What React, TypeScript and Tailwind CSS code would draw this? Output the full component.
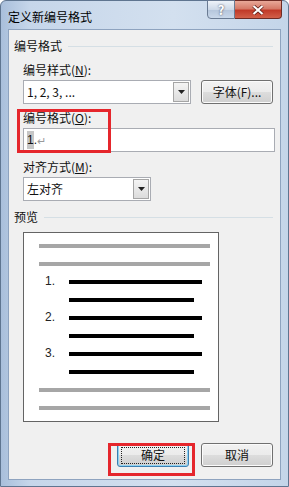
import React from "react";

const cjk = { fontFamily: '"Microsoft YaHei", "Noto Sans CJK SC", sans-serif' };

function Arrow() {
  return (
    <svg width="7" height="4" viewBox="0 0 7 4">
      <path d="M0 0h7L3.5 4z" fill="#222" />
    </svg>
  );
}

function Combo({ text, width }: { text: string; width: string }) {
  return (
    <div className={`${width} h-[24px] flex bg-white border border-[#a9acb3]`}>
      <div className="flex-1 flex items-center pl-[3px] text-[12px] text-[#111]">{text}</div>
      <div className="w-[16px] m-px flex items-center justify-center border border-[#a5a5a5] bg-[linear-gradient(#f4f4f4,#dcdcdc)]">
        <Arrow />
      </div>
    </div>
  );
}

function Btn({ label, focus }: { label: string; focus?: boolean }) {
  return (
    <div
      className={`w-[72px] h-[24px] rounded-[3px] border flex items-center justify-center text-[12px] text-[#111] bg-[linear-gradient(#f2f2f2_0%,#ebebeb_49%,#dddddd_50%,#cfcfcf_100%)] ${
        focus ? "border-[#3c7fb1] shadow-[inset_0_0_0_1px_#8fd3f3]" : "border-[#707070] shadow-[inset_0_0_0_1px_#fbfbfb]"
      }`}
    >
      {focus ? (
        <div className="w-[64px] h-[17px] border border-dotted border-[#222] flex items-center justify-center">{label}</div>
      ) : (
        label
      )}
    </div>
  );
}

const Gray = () => <div className="ml-[15px] w-[171px] h-[4px] bg-[#a6a6a6]" />;

function Black({ n, short }: { n?: string; short?: boolean }) {
  return (
    <div className="h-[4px] flex items-center">
      <span className="w-[45px] pl-[21px] text-[12px] leading-[14px] -mt-[2px] text-[#222]" style={{ fontFamily: '"Liberation Sans", Arial, sans-serif' }}>
        {n}
      </span>
      <div className={`${short ? "w-[125px]" : "w-[133px]"} h-[4px] bg-black`} />
    </div>
  );
}

export default function App() {
  return (
    <div
      className="relative w-[289px] h-[487px] flex flex-col rounded-t-[6px] border border-[#5f7590] bg-[linear-gradient(90deg,#a9bfdb_0%,#c6d6ea_10%,#d3e0ef_60%,#c4d5e9_100%)]"
      style={cjk}
    >
      {/* title bar */}
      <div className="h-[28px] flex items-start justify-between">
        <div className="pl-[7px] pt-[8px] text-[12px] leading-[16px] text-black">定义新编号格式</div>
        <div className="flex mr-[6px] -mt-px">
          <div className="w-[28px] h-[19px] rounded-bl-[4px] border border-[#6a7b93] bg-[linear-gradient(#eef3f9,#cdd9e8_50%,#b4c5db_51%,#c9d8ea)] flex items-center justify-center text-[13px] font-bold text-white [text-shadow:0_0_2px_#334]">
            ?
          </div>
          <div className="w-[47px] h-[19px] rounded-br-[4px] border border-l-0 border-[#6e2b24] bg-[linear-gradient(#e8a898,#d57a68_45%,#c13a28_55%,#d26049)] flex items-center justify-center">
            <svg width="12" height="10" viewBox="0 0 12 10">
              <path d="M1.5 1l9 8M10.5 1l-9 8" stroke="#5a1a14" strokeWidth="3.6" />
              <path d="M1.5 1l9 8M10.5 1l-9 8" stroke="#fff" strokeWidth="2.2" />
            </svg>
          </div>
        </div>
      </div>

      {/* client */}
      <div className="relative mx-[7px] h-[451px] bg-[#f0f0f0] border border-[#8ea3bf] text-[12px] text-[#111]">
        <div className="flex items-center h-[16px] mt-[8px] pl-[5px]">
          <span>编号格式</span>
          <div className="flex-1 ml-[6px] mr-[7px] h-px bg-[#d5dfe5]" />
        </div>

        <div className="pl-[14px] pr-[7px]">
          <div className="mt-[8px] h-[16px] leading-[16px]">
            编号样式(<u>N</u>):
          </div>
          <div className="mt-[2px] flex items-center">
            <Combo text="1, 2, 3, ..." width="w-[168px]" />
            <div className="ml-[10px]">
              <Btn label="字体(F)..." />
            </div>
          </div>

          <div className="mt-[6px] h-[16px] leading-[16px]">
            编号格式(<u>O</u>):
          </div>
          <div className="mt-[2px] w-[252px] h-[24px] bg-white border border-[#a9acb3] flex items-center pl-[3px]">
            <span className="bg-[#c6c6c6] leading-[18px]" style={{ fontFamily: '"Liberation Sans", Arial, sans-serif' }}>1</span>
            <span style={{ fontFamily: '"Liberation Sans", Arial, sans-serif' }}>.</span>
            <span className="text-[#9a9a9a] text-[11px]">↵</span>
          </div>

          <div className="mt-[7px] h-[16px] leading-[16px]">
            对齐方式(<u>M</u>):
          </div>
          <div className="mt-[2px]">
            <Combo text="左对齐" width="w-[128px]" />
          </div>
        </div>

        <div className="flex items-center h-[16px] mt-[8px] pl-[5px]">
          <span>预览</span>
          <div className="flex-1 ml-[6px] mr-[7px] h-px bg-[#d5dfe5]" />
        </div>

        <div className="ml-[14px] mt-[7px] w-[196px] h-[190px] bg-white border border-[#646464] pt-[11px] flex flex-col gap-[14px]">
          <Gray />
          <Gray />
          <Black n="1." />
          <Black short />
          <Black n="2." />
          <Black short />
          <Black n="3." />
          <Black short />
          <Gray />
          <Gray />
        </div>

        <div className="flex justify-end gap-[12px] mt-[21px] pr-[7px]">
          <Btn label="确定" focus />
          <Btn label="取消" />
        </div>

        {/* red annotation boxes */}
        <div className="absolute left-[8px] top-[79px] w-[94px] h-[44px] border-[3px] border-[#e5262c]" />
        <div className="absolute left-[99px] top-[413px] w-[87px] h-[33px] border-[3px] border-[#e5262c]" />
      </div>
    </div>
  );
}
